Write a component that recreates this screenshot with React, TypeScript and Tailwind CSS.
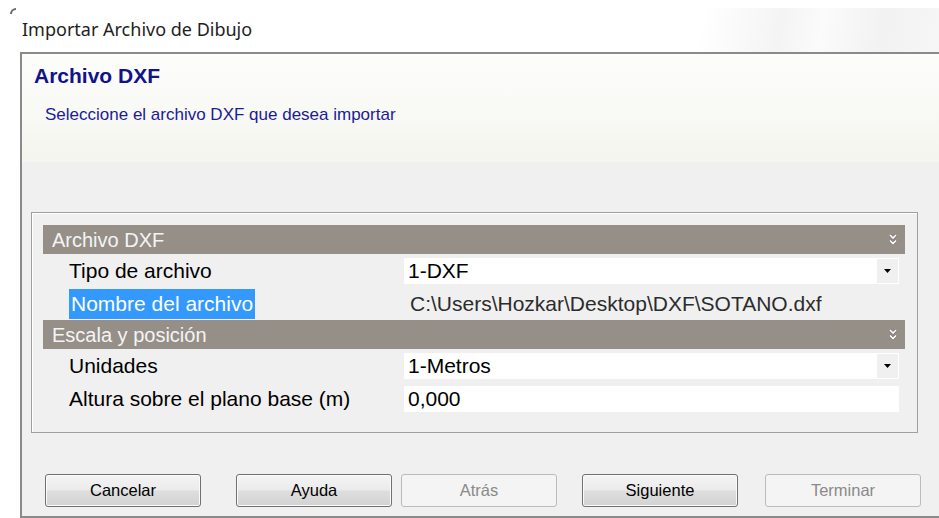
import { ReactNode } from "react";

type Row = {
  label: string;
  value: string;
  kind: "combo" | "text" | "readonly";
  selected?: boolean;
};

type Category = {
  title: string;
  rows: Row[];
};

const categories: Category[] = [
  {
    title: "Archivo DXF",
    rows: [
      { label: "Tipo de archivo", value: "1-DXF", kind: "combo" },
      {
        label: "Nombre del archivo",
        value: "C:\\Users\\Hozkar\\Desktop\\DXF\\SOTANO.dxf",
        kind: "readonly",
        selected: true,
      },
    ],
  },
  {
    title: "Escala y posición",
    rows: [
      { label: "Unidades", value: "1-Metros", kind: "combo" },
      { label: "Altura sobre el plano base (m)", value: "0,000", kind: "text" },
    ],
  },
];

function DoubleChevron() {
  return (
    <svg width="8" height="12" viewBox="0 0 8 12" className="shrink-0">
      <polyline points="1,1 4,4 7,1" fill="none" stroke="#7a7570" strokeWidth="3" />
      <polyline points="1,6.5 4,9.5 7,6.5" fill="none" stroke="#7a7570" strokeWidth="3" />
      <polyline points="1,1 4,4 7,1" fill="none" stroke="#ffffff" strokeWidth="1.7" />
      <polyline points="1,6.5 4,9.5 7,6.5" fill="none" stroke="#ffffff" strokeWidth="1.7" />
    </svg>
  );
}

function DropArrow() {
  return (
    <svg width="7" height="4" viewBox="0 0 7 4">
      <polygon points="0,0 7,0 3.5,4" fill="#000000" />
    </svg>
  );
}

function CategoryBar({ title }: { title: string }) {
  return (
    <div className="flex h-[29px] items-center justify-between bg-[#958f88] pl-[9px] pr-[8px]">
      <span className="text-[20px] leading-none text-[#f4f4f4]">{title}</span>
      <DoubleChevron />
    </div>
  );
}

function PropertyRow({ row }: { row: Row }) {
  let value: ReactNode;
  if (row.kind === "readonly") {
    value = <span className="pl-[6px] text-[21px] leading-none text-[#2c2c2c]">{row.value}</span>;
  } else {
    value = (
      <div className="flex h-[26px] w-[495px] items-center bg-white">
        <span className="flex-1 pl-[4px] text-[21px] leading-none text-black">{row.value}</span>
        {row.kind === "combo" && (
          <div className="mr-[1px] flex h-[24px] w-[21px] items-center justify-center bg-[#f0f0f0]">
            <DropArrow />
          </div>
        )}
      </div>
    );
  }

  return (
    <div className="flex h-[33px] items-center">
      <div className="flex h-[33px] w-[361px] items-center pl-[26px]">
        {row.selected ? (
          <span className="flex h-[30px] items-center bg-[#3399ff] px-[2px] text-[21px] leading-none text-white">
            {row.label}
          </span>
        ) : (
          <span className="text-[21px] leading-none text-black">{row.label}</span>
        )}
      </div>
      {value}
    </div>
  );
}

function WizardButton({ label, disabled, className }: { label: string; disabled?: boolean; className?: string }) {
  return (
    <button
      disabled={disabled}
      className={
        (disabled
          ? "border-[#b8bcbf] bg-[#f4f4f4] text-[#8a8a8a] "
          : "border-[#707070] bg-[linear-gradient(to_bottom,#f4f4f4_0%,#ebebeb_48%,#dedede_52%,#d2d2d2_100%)] text-black shadow-[inset_0_0_0_1px_#fbfbfb] ") +
        "flex h-[33px] w-[156px] items-center justify-center rounded-[3px] border text-[16.5px] leading-none " +
        (className ?? "")
      }
    >
      {label}
    </button>
  );
}

export default function App() {
  return (
    <div className="h-[518px] w-[939px] overflow-hidden bg-white pl-[10px] pt-[8px] font-['Liberation_Sans',Arial,sans-serif]">
      <div className="relative flex h-[510px] flex-col bg-[linear-gradient(100deg,#ffffff_0%,#ffffff_68%,#f4f4f4_76%,#fbfbfb_80%,#f2f2f2_86%,#f6f6f6_92%,#fdfdfd_100%)]">
        <div className="absolute left-0 top-0 h-[6px] w-[6px] rounded-tl-[6px] border-l-2 border-t-2 border-[#6b6b6b]" />

        {/* caption */}
        <div className="h-[44px] pl-[12px] pt-[9px] font-['Noto_Sans',sans-serif] text-[18px] leading-[24px] text-[#1e1e1e]">
          Importar Archivo de Dibujo
        </div>

        {/* client area */}
        <div className="ml-[10px] flex flex-1 flex-col border-b-2 border-l-2 border-t-2 border-[#8a8a8a] bg-[#f0f0f0]">
          <div className="h-[108px] bg-linear-to-b from-[#fdfdfc] to-[#f5f5ef] pl-[12px] pt-[10px]">
            <div className="text-[21px] font-bold leading-[24px] text-[#12128a]">Archivo DXF</div>
            <div className="mt-[17px] pl-[11px] text-[17px] leading-[20px] text-[#1c1c96]">
              Seleccione el archivo DXF que desea importar
            </div>
          </div>

          <div className="flex flex-1 flex-col pt-[50px]">
            <div className="ml-[9px] w-[887px] border border-[#9f9f9f] pb-[17px] pl-[11px] pt-[12px] shadow-[inset_1px_1px_0_#ffffff]">
              <div className="w-[862px]">
                {categories.map((cat) => (
                  <div key={cat.title}>
                    <CategoryBar title={cat.title} />
                    {cat.rows.map((row) => (
                      <PropertyRow key={row.label} row={row} />
                    ))}
                  </div>
                ))}
              </div>
            </div>

            <div className="mt-[41px] flex pl-[23px]">
              <WizardButton label="Cancelar" />
              <WizardButton label="Ayuda" className="ml-[35px]" />
              <WizardButton label="Atrás" disabled className="ml-[9px]" />
              <WizardButton label="Siguiente" className="ml-[25px]" />
              <WizardButton label="Terminar" disabled className="ml-[27px]" />
            </div>
          </div>
        </div>
      </div>
    </div>
  );
}
